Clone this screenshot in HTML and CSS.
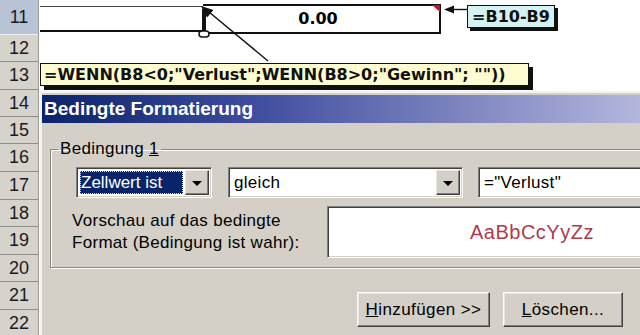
FILE: index.html
```html
<!DOCTYPE html>
<html lang="de">
<head>
    <meta charset="UTF-8">
    <title>Bedingte Formatierung</title>
    <link rel="stylesheet" href="styles.css">
</head>
<body>
    <div class="sheet">
        <div class="heads">
            <div class="rh sel h35">11</div>
            <div class="rh h27">12</div>
            <div class="rh h28">13</div>
            <div class="rh h27">14</div>
            <div class="rh h27">15</div>
            <div class="rh h28">16</div>
            <div class="rh h28">17</div>
            <div class="rh h27">18</div>
            <div class="rh h28">19</div>
            <div class="rh h27">20</div>
            <div class="rh h28">21</div>
            <div class="rh h27">22</div>
        </div>
        <div class="cells">
            <div class="row r11">
                <div class="cell-a"></div>
                <div class="cell-b">0.00</div>
                <div class="note">=B10-B9</div>
            </div>
            <div class="row r12"></div>
            <div class="row r13">
                <div class="formula">=WENN(B8&lt;0;"Verlust";WENN(B8&gt;0;"Gewinn"; ""))</div>
            </div>
            <div class="dialog">
                <div class="title">Bedingte Formatierung</div>
                <div class="dlg-body">
                    <fieldset class="group">
                        <legend>Bedingung <u>1</u></legend>
                        <div class="group-inner">
                            <div class="ctrl-row">
                                <div class="combo c1"><span class="val"><span class="focus">Zellwert ist</span></span><span class="drop"></span></div>
                                <div class="combo c2"><span class="val">gleich</span><span class="drop"></span></div>
                                <div class="field">="Verlust"</div>
                            </div>
                            <div class="preview-row">
                                <div class="preview-label">Vorschau auf das bedingte<br>Format (Bedingung ist wahr):</div>
                                <div class="preview"><span>AaBbCcYyZz</span></div>
                            </div>
                        </div>
                    </fieldset>
                    <div class="buttons">
                        <button class="btn b-add"><u>H</u>inzufügen &gt;&gt;</button>
                        <button class="btn b-del"><u>L</u>öschen...</button>
                    </div>
                </div>
            </div>
        </div>
        <!-- Spur-Pfeile und Kommentar-Verbinder liegen über den Zellen -->
        <svg class="tracers" width="640" height="100" viewBox="0 0 640 100">
            <line x1="268" y1="61" x2="209" y2="12" stroke="#111" stroke-width="1.4"/>
            <polygon points="201,6 213.5,10 207,17.5" fill="#111"/>
            <rect x="202" y="9" width="4" height="23" fill="#111"/>
            <rect x="199" y="31" width="10" height="6" rx="3" fill="#fff" stroke="#111" stroke-width="1.5"/>
            <polygon points="432,5 440,5 440,12" fill="#c8102e"/>
            <line x1="452" y1="9.5" x2="467" y2="9.5" stroke="#111" stroke-width="1.4"/>
            <polygon points="444,9.5 454,5.5 454,13.5" fill="#111"/>
        </svg>
    </div>
</body>
</html>
```

FILE: styles.css
```css
html, body { margin: 0; padding: 0; }
body { width: 640px; height: 335px; overflow: hidden; background: #fff; font-family: "Liberation Sans", Arial, sans-serif; color: #000; }
.sheet { position: relative; display: flex; width: 640px; height: 335px; overflow: hidden; }

/* Zeilenköpfe */
.heads { width: 38px; flex: none; background: #d6d3cd; border-right: 1px solid #9c9a94; }
.rh { box-sizing: border-box; display: flex; align-items: center; justify-content: center; font-size: 18px; color: #1a1a1a; border-bottom: 1px solid #8e8c87; }
.rh.sel { background: #b8c3d6; border-bottom-color: #eef0f4; }
.h35 { height: 35px; }
.h27 { height: 27px; }
.h28 { height: 28px; }

.cells { flex: 1; margin-left: 1px; display: flex; flex-direction: column; min-width: 0; }
.row { flex: none; }
.r11 { height: 35px; display: flex; align-items: flex-start; padding-top: 4px; box-sizing: border-box; }
.r12 { height: 27px; }
.r13 { height: 29px; }

.cell-a { width: 163px; height: 26px; margin-top: 2px; box-sizing: border-box; border-top: 1px solid #444; border-bottom: 2px solid #111; }
.cell-b { width: 238px; height: 30px; box-sizing: border-box; border: 2px solid #111; border-left: none; font-family: "DejaVu Sans", Verdana, sans-serif; font-weight: bold; font-size: 16px; text-align: center; line-height: 26px; padding-right: 6px; }
.note { margin: 1px 0 0 26px; width: 88px; height: 23px; box-sizing: border-box; border: 1px solid #111; background: #d4f2f2; box-shadow: 3px 3px 0 #111; font-family: "DejaVu Sans", Verdana, sans-serif; font-weight: bold; font-size: 16px; line-height: 21px; text-align: center; color: #111; }

.formula { margin-top: 1px; width: 489px; height: 23px; box-sizing: border-box; border: 1px solid #111; background: #fdfdcf; box-shadow: 4px 4px 0 #111; padding-left: 3px; font-family: "DejaVu Sans", Verdana, sans-serif; font-weight: bold; font-size: 16px; line-height: 21px; white-space: nowrap; color: #111; }

/* Dialog */
.dialog { flex: 1; background: #d4d0c8; border-top: 2px solid #f4f3ef; border-left: 2px solid #f4f3ef; padding-top: 2px; font-size: 17px; letter-spacing: 0.3px; }
.title { height: 28px; background: linear-gradient(90deg, #0a246a, #3e4c9e 35%, #b4b6dc); color: #fff; font-weight: bold; font-size: 19px; letter-spacing: 0; line-height: 28px; padding-left: 2px; white-space: nowrap; }
.dlg-body { padding: 16px 0 0 8px; }
.group { margin: 0 -40px 0 0; padding: 0; border: 1px solid #8a877f; box-shadow: inset 1px 1px 0 #fff, 1px 1px 0 #fff; }
.group legend { margin-left: 7px; padding: 0 2px; line-height: 20px; }
.group-inner { padding: 8px 0 9px 25px; }

.ctrl-row { display: flex; gap: 15px; height: 31px; }
.combo, .field, .preview { box-sizing: border-box; background: #fff; border: 1px solid; border-color: #808080 #fff #fff #808080; box-shadow: inset 1px 1px 0 #404040, inset -1px -1px 0 #d4d0c8; }
.combo { display: flex; padding: 2px; }
.c1 { width: 136px; }
.c2 { width: 235px; margin-left: 1px; }
.field { flex: 1; padding-left: 5px; line-height: 29px; }
.val { flex: 1; display: flex; line-height: 25px; padding-left: 3px; }
.c1 .val { padding: 1px; letter-spacing: 0; }
.focus { flex: 1; background: #0a246a; color: #fff; outline: 1px dotted #f0e68c; outline-offset: -1px; padding-left: 1px; line-height: 23px; }
.drop { width: 24px; margin-left: 1px; box-sizing: border-box; background: #d4d0c8; border: 1px solid; border-color: #e8e6e0 #404040 #404040 #e8e6e0; box-shadow: inset -1px -1px 0 #808080; display: flex; align-items: center; justify-content: center; }
.drop::after { content: ""; border-left: 5px solid transparent; border-right: 5px solid transparent; border-top: 5px solid #000; margin-top: 1px; }

.preview-row { display: flex; align-items: center; margin-top: 8px; }
.preview-label { width: 255px; margin-left: -4px; line-height: 22px; white-space: nowrap; }
.preview { flex: 1; height: 52px; display: flex; align-items: center; padding-left: 142px; }
.preview span { font-size: 20px; letter-spacing: 0.5px; color: #b23a4c; }

.buttons { display: flex; justify-content: flex-end; gap: 13px; padding: 24px 17px 0 0; }
.btn { height: 35px; box-sizing: border-box; background: #d4d0c8; border: 1px solid; border-color: #fff #404040 #404040 #fff; box-shadow: inset -1px -1px 0 #808080, inset 1px 1px 0 #e8e6e0; font-family: "Liberation Sans", Arial, sans-serif; font-size: 17px; letter-spacing: 0.4px; color: #000; padding: 0; }
.b-add { width: 133px; }
.b-del { width: 120px; }

.tracers { position: absolute; left: 0; top: 0; pointer-events: none; }
```
